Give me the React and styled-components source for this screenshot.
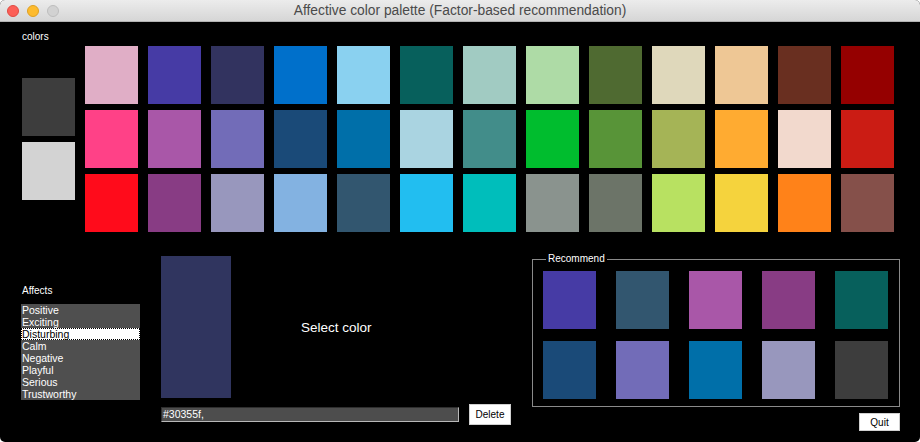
import React from "react";
import styled, { createGlobalStyle } from "styled-components";

const Global = createGlobalStyle`
  html, body { margin: 0; padding: 0; background: #ffffff; }
  body { font-family: "Liberation Sans", Arial, Helvetica, sans-serif; }
  * { box-sizing: border-box; }
`;

const Window = styled.div`
  width: 920px;
  height: 442px;
  background: #000;
  border-radius: 5px;
  overflow: hidden;
  display: flex;
  flex-direction: column;
`;

const TitleBar = styled.div`
  flex: none;
  height: 22px;
  background: linear-gradient(#ececec, #d6d6d6);
  border-bottom: 1px solid #b3b3b3;
  display: grid;
  grid-template-columns: 1fr auto 1fr;
  align-items: center;
`;

const Lights = styled.div`
  display: flex;
  gap: 8px;
  padding-left: 7px;
`;

const Light = styled.span`
  width: 12px;
  height: 12px;
  border-radius: 50%;
  background: ${(p) => p.$c};
  border: 1px solid ${(p) => p.$b};
`;

const Title = styled.div`
  font-size: 13.8px;
  color: #4a4a4a;
  line-height: 16px;
`;

const Content = styled.div`
  flex: 1;
  padding-left: 21px;
  display: flex;
  flex-direction: column;
`;

const TopRow = styled.div`
  display: flex;
  align-items: flex-start;
`;

const SideCol = styled.div`
  width: 64px;
  padding-top: 9px;
  padding-left: 1px;
  display: flex;
  flex-direction: column;
`;

const Label = styled.div`
  font-size: 10px;
  line-height: 12px;
  color: #fff;
`;

const Swatch = styled.div`
  width: 53px;
  height: 58px;
  background: ${(p) => p.$c};
`;

const SideSwatches = styled.div`
  margin-top: 35px;
  display: flex;
  flex-direction: column;
  gap: 6px;
`;

const Palette = styled.div`
  margin-top: 24px;
  display: grid;
  grid-template-columns: repeat(13, 53px);
  grid-auto-rows: 58px;
  column-gap: 10px;
  row-gap: 6px;
`;

const BottomRow = styled.div`
  margin-top: 21px;
  display: flex;
  align-items: flex-start;
`;

const AffectsCol = styled.div`
  width: 119px;
  padding-top: 32px;
  margin-right: 21px;
  display: flex;
  flex-direction: column;
  gap: 7px;
`;

const AffectsLabel = styled(Label)`
  padding-left: 1px;
`;

const List = styled.div`
  background: #4f4f4f;
  height: 96px;
`;

const Item = styled.div`
  height: 12px;
  line-height: 12px;
  font-size: 10.5px;
  padding-left: 1px;
  color: ${(p) => (p.$sel ? "#000" : "#fff")};
  background: ${(p) => (p.$sel ? "#fff" : "transparent")};
  outline: ${(p) => (p.$sel ? "1px dotted #000" : "none")};
  outline-offset: -1px;
`;

const Middle = styled.div`
  width: 350px;
  padding-top: 3px;
  display: flex;
  flex-direction: column;
`;

const PreviewArea = styled.div`
  display: flex;
  align-items: center;
`;

const Preview = styled.div`
  width: 70px;
  height: 142px;
  background: ${(p) => p.$c};
`;

const SelectText = styled.div`
  margin-left: 70px;
  font-size: 13.5px;
  color: #fff;
`;

const EntryRow = styled.div`
  margin-top: 6px;
  display: flex;
  align-items: center;
  gap: 10px;
`;

const Entry = styled.div`
  width: 298px;
  height: 15px;
  background: #4d4d4d;
  border-top: 1px solid #2e2e2e;
  border-left: 1px solid #2e2e2e;
  border-right: 1px solid #b8b8b8;
  border-bottom: 1px solid #b8b8b8;
  color: #fff;
  font-size: 10.5px;
  line-height: 13px;
  padding-left: 1px;
`;

const Button = styled.button`
  width: ${(p) => p.$w}px;
  height: ${(p) => p.$h}px;
  background: #fff;
  border: 1px solid #d0d0d0;
  border-radius: 0;
  padding: 0;
  font-family: "Liberation Sans", Arial, sans-serif;
  font-size: 10px;
  color: #000;
`;

const RightCol = styled.div`
  margin-left: 21px;
  width: 368px;
  display: flex;
  flex-direction: column;
  align-items: flex-end;
  gap: 6px;
`;

const Frame = styled.fieldset`
  width: 368px;
  margin: 0;
  border: 1px solid #8a8a8a;
  padding: 6px 11px 7px 10px;
`;

const Legend = styled.legend`
  margin-left: 3px;
  padding: 0 2px;
  font-size: 10px;
  line-height: 12px;
  color: #fff;
`;

const RecGrid = styled.div`
  display: grid;
  grid-template-columns: repeat(5, 53px);
  grid-auto-rows: 58px;
  column-gap: 20px;
  row-gap: 12px;
`;

const palette = [
  "#e0aec6", "#463ba5", "#32335f", "#0070cb", "#8ad1f0", "#07605c", "#a1cbc2", "#aedba6", "#4f6a31", "#dfd8bb", "#eec795", "#692f20", "#950000",
  "#ff4187", "#a957a8", "#726cb8", "#1a4a78", "#006fa9", "#aad4e1", "#428d8a", "#00bd2e", "#589438", "#a5b456", "#ffab31", "#f2d9cd", "#cb1c14",
  "#ff0b1b", "#883c84", "#9897bd", "#83b2e1", "#32566f", "#22bef0", "#00bebb", "#8a938e", "#6c7468", "#b8e161", "#f5d33d", "#ff8219", "#85504a",
];

const recommend = [
  "#463ba5", "#32566f", "#a957a8", "#883c84", "#07605c",
  "#1a4a78", "#726cb8", "#006fa9", "#9897bd", "#3d3d3d",
];

const affects = ["Positive", "Exciting", "Disturbing", "Calm", "Negative", "Playful", "Serious", "Trustworthy"];

export default function App() {
  return (
    <>
      <Global />
      <Window>
        <TitleBar>
          <Lights>
            <Light $c="#fc5f57" $b="#de4a43" />
            <Light $c="#fdbb2e" $b="#dea023" />
            <Light $c="#d2d2d2" $b="#bdbdbd" />
          </Lights>
          <Title>Affective color palette (Factor-based recommendation)</Title>
          <div />
        </TitleBar>
        <Content>
          <TopRow>
            <SideCol>
              <Label>colors</Label>
              <SideSwatches>
                <Swatch $c="#3d3d3d" />
                <Swatch $c="#d3d3d3" />
              </SideSwatches>
            </SideCol>
            <Palette>
              {palette.map((c, i) => (
                <Swatch key={i} $c={c} />
              ))}
            </Palette>
          </TopRow>
          <BottomRow>
            <AffectsCol>
              <AffectsLabel>Affects</AffectsLabel>
              <List>
                {affects.map((a) => (
                  <Item key={a} $sel={a === "Disturbing"}>{a}</Item>
                ))}
              </List>
            </AffectsCol>
            <Middle>
              <PreviewArea>
                <Preview $c="#30355f" />
                <SelectText>Select color</SelectText>
              </PreviewArea>
              <EntryRow>
                <Entry>#30355f,</Entry>
                <Button $w={42} $h={21}>Delete</Button>
              </EntryRow>
            </Middle>
            <RightCol>
              <Frame>
                <Legend>Recommend</Legend>
                <RecGrid>
                  {recommend.map((c, i) => (
                    <Swatch key={i} $c={c} />
                  ))}
                </RecGrid>
              </Frame>
              <Button $w={41} $h={18}>Quit</Button>
            </RightCol>
          </BottomRow>
        </Content>
      </Window>
    </>
  );
}
